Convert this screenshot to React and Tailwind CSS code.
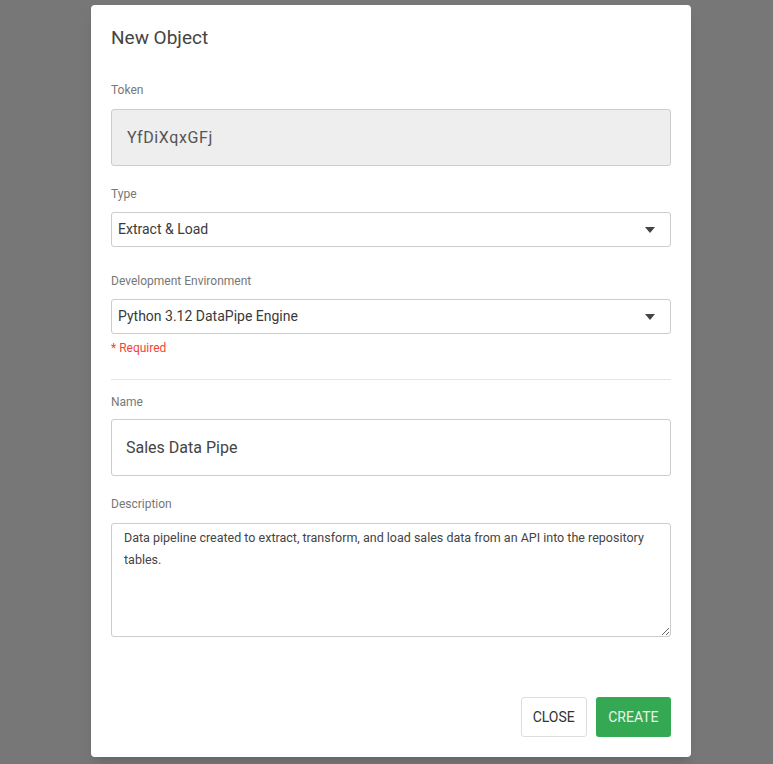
import { useState } from 'react';

const font = { fontFamily: 'Roboto, "Liberation Sans", sans-serif' };

function Caret() {
    return (
        <svg width="10" height="6" viewBox="0 0 10 6" className="shrink-0">
            <path d="M0 0h10L5 6z" fill="#444" />
        </svg>
    );
}

function Label({ children }) {
    return <label className="block text-[12px] leading-none text-[#777]">{children}</label>;
}

function SelectBox({ value }) {
    return (
        <div className="mt-[12px] flex h-[35px] items-center justify-between rounded-[3px] border border-[#ccc] bg-white pl-[6px] pr-[15px]">
            <span className="text-[14px] text-[#3a3a3a]">{value}</span>
            <Caret />
        </div>
    );
}

export default function App() {
    const [name, setName] = useState('Sales Data Pipe');
    const [desc, setDesc] = useState(
        'Data pipeline created to extract, transform, and load sales data from an API into the repository tables.'
    );

    return (
        <div className="min-h-[764px] w-full bg-[#777777] pt-[5px]" style={font}>
            <div className="ml-[91px] w-[600px] rounded-[4px] bg-white px-[20px] pb-[20px] pt-[21px] shadow-lg">
                <h2 className="text-[19px] leading-[24px] text-[#444]">New Object</h2>

                <div className="mt-[34px]">
                    <Label>Token</Label>
                    <div className="mt-[13px] flex h-[57px] items-center rounded-[3px] border border-[#ccc] bg-[#eeeeee] px-[15px] text-[16px] tracking-[0.6px] text-[#555]">
                        YfDiXqxGFj
                    </div>
                </div>

                <div className="mt-[22px]">
                    <Label>Type</Label>
                    <SelectBox value="Extract & Load" />
                </div>

                <div className="mt-[28px]">
                    <Label>Development Environment</Label>
                    <SelectBox value="Python 3.12 DataPipe Engine" />
                    <p className="mt-[8px] text-[12px] leading-none text-[#f44336]">* Required</p>
                </div>

                <hr className="mt-[25px] border-t border-[#e5e5e5]" />

                <div className="mt-[16px]">
                    <Label>Name</Label>
                    <input
                        value={name}
                        onChange={(e) => setName(e.target.value)}
                        className="mt-[11px] block h-[57px] w-full rounded-[3px] border border-[#ccc] bg-white px-[14px] text-[16px] text-[#444] outline-none"
                        style={font}
                    />
                </div>

                <div className="mt-[22px]">
                    <Label>Description</Label>
                    <textarea
                        value={desc}
                        onChange={(e) => setDesc(e.target.value)}
                        className="mt-[13px] block h-[114px] w-full rounded-[3px] border border-[#ccc] bg-white px-[12px] py-[3px] text-[12.5px] leading-[22px] text-[#444] outline-none"
                        style={font}
                    />
                </div>

                <div className="mt-[60px] flex justify-end gap-[9px]">
                    <button className="h-[40px] rounded-[3px] border border-[#ddd] bg-white px-[11px] text-[14px] text-[#333]">
                        CLOSE
                    </button>
                    <button className="h-[40px] rounded-[3px] bg-[#34a853] px-[12.5px] text-[14px] text-[#e8f5ea]">
                        CREATE
                    </button>
                </div>
            </div>
        </div>
    );
}
